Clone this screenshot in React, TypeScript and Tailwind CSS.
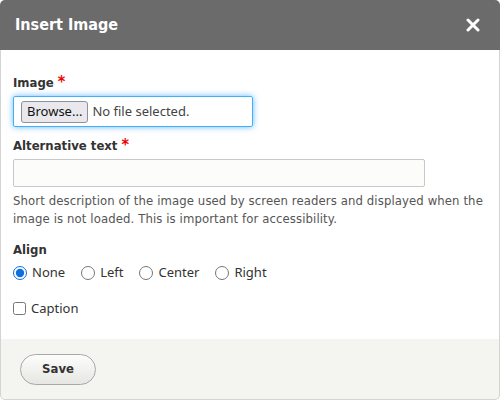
import React from "react";

export default function App() {
  return (
    <div className="w-[500px] h-[400px] flex flex-col bg-white">
      <div className="h-[50px] shrink-0 bg-[#6b6b6b] rounded-t-[5px] flex items-center justify-between pl-[15px] pr-[20px]">
        <span className="text-white font-bold text-[16px] [font-family:'DejaVu_Sans_Condensed','DejaVu_Sans',sans-serif]">Insert Image</span>
        <svg width="14" height="14" viewBox="0 0 14 14">
          <path d="M2 2 L12 12 M12 2 L2 12" stroke="white" strokeWidth="3" strokeLinecap="round" />
        </svg>
      </div>
      <div className="flex-1 border-x border-[#d4d4d4] px-[12px] pt-[23px] [font-family:'DejaVu_Sans',sans-serif] text-[#333]">
        <div className="text-[13px] font-bold leading-[18px] [font-family:'DejaVu_Sans_Condensed','DejaVu_Sans',sans-serif]">
          Image <span className="text-[#e00] text-[16px]">*</span>
        </div>
        <div className="mt-[4px] w-[240px] h-[31px] border border-[#40b0f8] rounded-[2px] shadow-[0_0_6px_rgba(0,140,255,0.6)] flex items-center px-[7px] gap-[4px] [font-family:'Noto_Sans',sans-serif]">
          <span className="h-[22px] px-[5px] border border-[#8f8f9d] rounded-[3px] bg-[#e9e9ed] text-[13px] text-[#111] flex items-center">Browse...</span>
          <span className="text-[13px] text-[#444]">No file selected.</span>
        </div>
        <div className="mt-[9px] text-[13px] font-bold leading-[18px] [font-family:'DejaVu_Sans_Condensed','DejaVu_Sans',sans-serif]">
          Alternative text <span className="text-[#e00] text-[16px]">*</span>
        </div>
        <div className="mt-[4px] w-[412px] h-[28px] border border-[#c8c8c8] rounded-[2px] bg-[#fcfcfa]"></div>
        <div className="mt-[5px] text-[11.7px] leading-[18px] text-[#555] tracking-[0.1px]">
          Short description of the image used by screen readers and displayed when the image is not loaded. This is important for accessibility.
        </div>
        <div className="mt-[13px] text-[13px] font-bold leading-[18px] [font-family:'DejaVu_Sans_Condensed','DejaVu_Sans',sans-serif]">Align</div>
        <div className="mt-[4px] flex items-center gap-[16px] text-[13px] text-[#333] [font-family:'Noto_Sans',sans-serif]">
          <label className="flex items-center gap-[5px]">
            <input type="radio" name="align" defaultChecked className="m-0 w-[14px] h-[14px] accent-[#0b6fe0]" /> None
          </label>
          <label className="flex items-center gap-[5px]">
            <input type="radio" name="align" className="m-0 w-[14px] h-[14px]" /> Left
          </label>
          <label className="flex items-center gap-[5px]">
            <input type="radio" name="align" className="m-0 w-[14px] h-[14px]" /> Center
          </label>
          <label className="flex items-center gap-[5px]">
            <input type="radio" name="align" className="m-0 w-[14px] h-[14px]" /> Right
          </label>
        </div>
        <label className="mt-[16px] flex items-center gap-[5px] text-[13px] text-[#333] [font-family:'Noto_Sans',sans-serif]">
          <input type="checkbox" className="m-0 w-[13px] h-[13px]" /> Caption
        </label>
      </div>
      <div className="h-[61px] shrink-0 bg-[#f4f4f0] border border-t-0 border-[#d4d4d4] rounded-b-[5px] flex items-center pl-[19px]">
        <button className="w-[76px] h-[31px] rounded-full border border-[#a8a8a8] bg-[linear-gradient(#fdfdfd,#e6e6e2)] text-[13px] font-bold text-[#333] [font-family:'DejaVu_Sans_Condensed','DejaVu_Sans',sans-serif]">
          Save
        </button>
      </div>
    </div>
  );
}
